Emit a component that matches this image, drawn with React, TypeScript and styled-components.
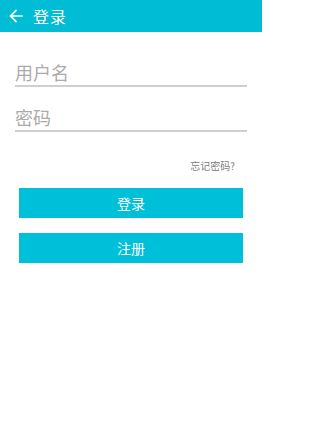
import React from 'react'
import styled, { createGlobalStyle } from 'styled-components'

const GlobalStyle = createGlobalStyle`
  html, body {
    margin: 0;
    padding: 0;
    background: #ffffff;
  }
  body {
    font-family: "Noto Sans CJK SC", "Noto Sans", sans-serif;
  }
`

const Page = styled.div`
  width: 262px;
  min-height: 448px;
  background: #ffffff;
`

const Header = styled.header`
  height: 32px;
  background: #00bcd4;
  display: flex;
  align-items: center;
  padding-left: 6px;
  gap: 7px;
  color: #ffffff;
`

const BackIcon = styled.svg`
  width: 20px;
  height: 20px;
  display: block;
`

const Title = styled.h1`
  margin: 0;
  font-size: 16px;
  font-weight: 400;
  line-height: 20px;
  letter-spacing: 1px;
`

const Form = styled.form`
  display: flex;
  flex-direction: column;
  padding: 31px 15px 0;
`

const Field = styled.input`
  all: unset;
  box-sizing: border-box;
  width: 100%;
  height: 24px;
  padding-bottom: 4px;
  line-height: 18px;
  font-family: inherit;
  font-size: 18px;
  color: #555;
  border-bottom: 2px solid #cfcfcf;

  & + & {
    margin-top: 21px;
  }

  &::placeholder {
    color: #ababab;
  }
`

const Forgot = styled.a`
  align-self: flex-end;
  margin: 28px 12px 0 0;
  font-size: 10px;
  line-height: 12px;
  color: #808080;
  text-decoration: none;
`

const Actions = styled.div`
  display: flex;
  flex-direction: column;
  gap: 15px;
  padding: 16px 4px 0;
`

const Button = styled.button`
  all: unset;
  box-sizing: border-box;
  height: 30px;
  background: #00bfd8;
  color: #ffffff;
  font-family: inherit;
  font-size: 14px;
  text-align: center;
  line-height: 30px;
  cursor: pointer;
`

const App: React.FC = () => {
  return (
    <Page>
      <GlobalStyle />
      <Header>
        <BackIcon viewBox="0 0 24 24" fill="#ffffff">
          <path d="M20 11H7.83l5.59-5.59L12 4l-8 8 8 8 1.41-1.41L7.83 13H20v-2z" />
        </BackIcon>
        <Title>登录</Title>
      </Header>
      <Form onSubmit={(e) => e.preventDefault()}>
        <Field placeholder="用户名" />
        <Field placeholder="密码" type="password" />
        <Forgot href="#">忘记密码?</Forgot>
        <Actions>
          <Button type="submit">登录</Button>
          <Button type="button">注册</Button>
        </Actions>
      </Form>
    </Page>
  )
}

export default App
